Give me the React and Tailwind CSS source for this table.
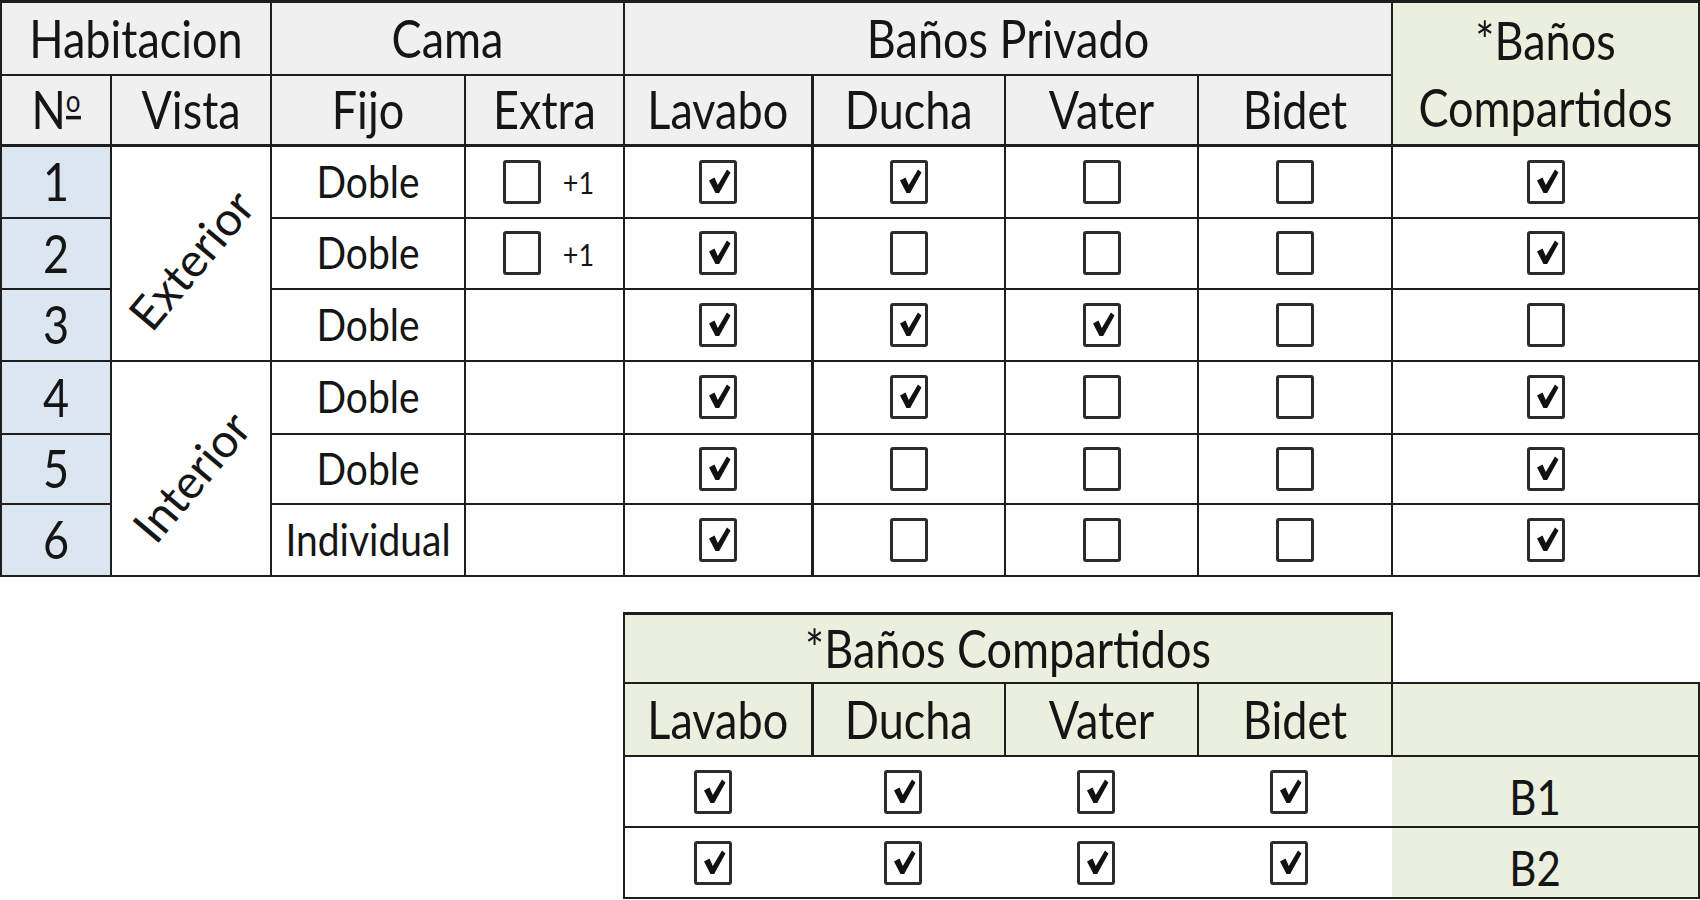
import React from "react";

function T({ children, size }) {
  return (
    <span className={`inline-block leading-none scale-y-[1.16] whitespace-nowrap ${size || "text-[45px]"}`}>
      {children}
    </span>
  );
}

function Check({ checked }) {
  return (
    <span className="inline-flex w-[38px] h-[44px] border-[3px] border-[#2b2b2b] rounded-[3px] bg-white items-center justify-center align-middle">
      {checked && (
        <svg viewBox="0 0 32 38" className="w-[32px] h-[38px]">
          <path d="M7 17.5 L12.5 14.5 L15.8 22 L25 6.5 L28.5 9.5 L17.2 30 L13.5 30 Z" fill="#111" />
        </svg>
      )}
    </span>
  );
}

const td = "border-2 border-[#1e1e1e] text-center align-middle p-0";

const rows = [
  { n: "1", fijo: "Doble", extra: true, c: [1, 1, 0, 0, 1] },
  { n: "2", fijo: "Doble", extra: true, c: [1, 0, 0, 0, 1] },
  { n: "3", fijo: "Doble", extra: false, c: [1, 1, 1, 0, 0] },
  { n: "4", fijo: "Doble", extra: false, c: [1, 1, 0, 0, 1] },
  { n: "5", fijo: "Doble", extra: false, c: [1, 0, 0, 0, 1] },
  { n: "6", fijo: "Individual", extra: false, c: [1, 0, 0, 0, 1] },
];
const heights = ["h-[72px]", "h-[71px]", "h-[72px]", "h-[73px]", "h-[70px]", "h-[72px]"];

export default function App() {
  return (
    <div className="w-[1700px] h-[900px] bg-white text-[#151515] [font-family:Lato,'Open_Sans',sans-serif] overflow-hidden">
      <table className="table-fixed border-collapse w-[1698px]">
        <colgroup>
          <col className="w-[110px]" />
          <col className="w-[160px]" />
          <col className="w-[194px]" />
          <col className="w-[159px]" />
          <col className="w-[188px]" />
          <col className="w-[193px]" />
          <col className="w-[193px]" />
          <col className="w-[194px]" />
          <col className="w-[307px]" />
        </colgroup>
        <tbody>
          <tr className="h-[73px]">
            <td colSpan={2} className={`${td} border-t-[3px] bg-[#f0f0f0]`}><T>Habitacion</T></td>
            <td colSpan={2} className={`${td} border-t-[3px] bg-[#f0f0f0]`}><T>Cama</T></td>
            <td colSpan={4} className={`${td} border-t-[3px] bg-[#f0f0f0]`}><T>Baños Privado</T></td>
            <td rowSpan={2} className={`${td} border-t-[3px] bg-[#ebf0de]`}>
              <div className="flex flex-col items-center gap-[22px]">
                <T>*Baños</T>
                <T>Compartidos</T>
              </div>
            </td>
          </tr>
          <tr className="h-[71px]">
            <td className={`${td} bg-[#f0f0f0]`}>
              <T>N<span className="inline-block text-[26px] align-top border-b-[3px] border-[#151515] leading-[26px] mt-[2px]">o</span></T>
            </td>
            <td className={`${td} bg-[#f0f0f0]`}><T>Vista</T></td>
            <td className={`${td} bg-[#f0f0f0]`}><T>Fijo</T></td>
            <td className={`${td} bg-[#f0f0f0]`}><T>Extra</T></td>
            <td className={`${td} border-r-[3px] bg-[#f0f0f0]`}><T>Lavabo</T></td>
            <td className={`${td} bg-[#f0f0f0]`}><T>Ducha</T></td>
            <td className={`${td} bg-[#f0f0f0]`}><T>Vater</T></td>
            <td className={`${td} bg-[#f0f0f0]`}><T>Bidet</T></td>
          </tr>
          {rows.map((r, i) => (
            <tr key={r.n} className={heights[i]}>
              <td className={`${td} ${i === 0 ? "border-t-[3px]" : ""} bg-[#dce6f1]`}><T>{r.n}</T></td>
              {i === 0 && (
                <td rowSpan={3} className={`${td} border-t-[3px] bg-white`}>
                  <div className="flex items-center justify-center translate-y-[6px]">
                    <span className="inline-block -rotate-[50deg] text-[47px] leading-none whitespace-nowrap">Exterior</span>
                  </div>
                </td>
              )}
              {i === 3 && (
                <td rowSpan={3} className={`${td} bg-white`}>
                  <div className="flex items-center justify-center translate-y-[8px]">
                    <span className="inline-block -rotate-[50deg] text-[47px] leading-none whitespace-nowrap">Interior</span>
                  </div>
                </td>
              )}
              <td className={`${td} ${i === 0 ? "border-t-[3px]" : ""}`}><T size="text-[39px]">{r.fijo}</T></td>
              <td className={`${td} ${i === 0 ? "border-t-[3px]" : ""}`}>
                {r.extra && (
                  <div className="flex items-center justify-center gap-[22px] pl-[8px]">
                    <Check checked={false} />
                    <T size="text-[27px]">+1</T>
                  </div>
                )}
              </td>
              {r.c.map((v, j) => (
                <td key={j} className={`${td} ${i === 0 ? "border-t-[3px]" : ""} ${j === 0 ? "border-r-[3px]" : ""}`}>
                  <Check checked={!!v} />
                </td>
              ))}
            </tr>
          ))}
        </tbody>
      </table>

      <table className="table-fixed border-collapse w-[1075px] mt-[35px] ml-[623px]">
        <colgroup>
          <col className="w-[188px]" />
          <col className="w-[193px]" />
          <col className="w-[193px]" />
          <col className="w-[194px]" />
          <col className="w-[307px]" />
        </colgroup>
        <tbody>
          <tr className="h-[70px]">
            <td colSpan={4} className={`${td} border-t-[3px] bg-[#ebf0de]`}><T>*Baños Compartidos</T></td>
            <td className="p-0 border-0"></td>
          </tr>
          <tr className="h-[73px]">
            <td className={`${td} border-r-[3px] bg-[#ebf0de]`}><T>Lavabo</T></td>
            <td className={`${td} bg-[#ebf0de]`}><T>Ducha</T></td>
            <td className={`${td} bg-[#ebf0de]`}><T>Vater</T></td>
            <td className={`${td} bg-[#ebf0de]`}><T>Bidet</T></td>
            <td className={`${td} bg-[#ebf0de]`}></td>
          </tr>
          {["B1", "B2"].map((b) => (
            <tr key={b} className="h-[71px]">
              <td className="border-y-2 border-l-2 border-[#1e1e1e] text-center align-middle p-0 pr-[12px]"><Check checked /></td>
              <td className="border-y-2 border-[#1e1e1e] text-center align-middle p-0 pr-[12px]"><Check checked /></td>
              <td className="border-y-2 border-[#1e1e1e] text-center align-middle p-0 pr-[12px]"><Check checked /></td>
              <td className="border-y-2 border-[#1e1e1e] text-center align-middle p-0 pr-[12px]"><Check checked /></td>
              <td className="border-y-2 border-r-2 border-[#1e1e1e] text-center align-bottom pb-[8px] pr-[20px] bg-[#ebf0de]"><T size="text-[42px]">{b}</T></td>
            </tr>
          ))}
        </tbody>
      </table>
    </div>
  );
}
